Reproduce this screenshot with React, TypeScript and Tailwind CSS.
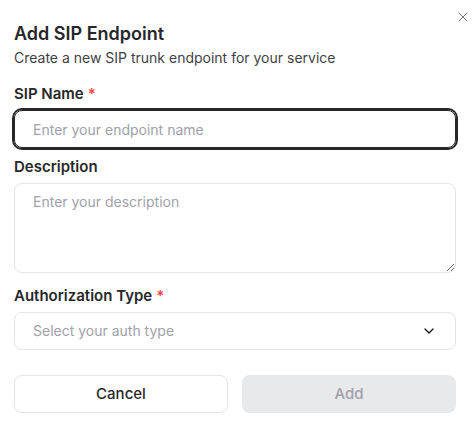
import { ChevronDown, X } from "lucide-react";

// Add SIP endpoint dialog: title, three fields and the action row.
function FieldLabel({ children, required }: { children: React.ReactNode; required?: boolean }) {
  return (
    <label className="block h-6 text-[15px] leading-6 font-semibold text-[#27272a]">
      {children}
      {required && <span className="ml-1 text-[#ef4444]">*</span>}
    </label>
  );
}

export default function App() {
  return (
    <div className="relative w-[476px] h-[424px] bg-white font-['Inter',sans-serif] pl-[14px] pr-5 pt-5">
      <button className="absolute top-[9px] right-[5px] text-[#71717a]">
        <X size={16} strokeWidth={1.5} />
      </button>

      <h2 className="text-lg leading-7 font-semibold text-[#27272a]">Add SIP Endpoint</h2>
      <p className="text-sm leading-5 text-[#3f3f46]">Create a new SIP trunk endpoint for your service</p>

      <div className="mt-[14px] flex flex-col gap-1">
        <FieldLabel required>SIP Name</FieldLabel>
        <input
          className="block h-[38px] w-full rounded-lg border border-[#27272a] ring-2 ring-[#27272a] px-[18px] text-sm outline-none placeholder:text-[#a1a1aa]"
          placeholder="Enter your endpoint name"
        />
      </div>

      <div className="mt-[7px] flex flex-col gap-1">
        <FieldLabel>Description</FieldLabel>
        <textarea
          className="block h-[90px] w-full rounded-lg border border-[#e4e4e7] px-[18px] py-2 text-sm leading-5 outline-none placeholder:text-[#a1a1aa]"
          placeholder="Enter your description"
        />
      </div>

      <div className="mt-[11px] flex flex-col gap-1">
        <FieldLabel required>Authorization Type</FieldLabel>
        <button className="flex h-[38px] w-full items-center justify-between rounded-lg border border-[#e4e4e7] px-[18px] text-sm text-[#a1a1aa]">
          <span>Select your auth type</span>
          <ChevronDown size={16} strokeWidth={2} className="text-[#18181b]" />
        </button>
      </div>

      <div className="mt-[25px] grid grid-cols-2 gap-[14px]">
        <button className="h-[38px] rounded-lg border border-[#e4e4e7] bg-white text-[15px] font-medium text-[#27272a]">
          Cancel
        </button>
        <button className="h-[38px] rounded-lg bg-[#e8e9eb] text-[15px] font-medium text-[#a1a1aa]" disabled>
          Add
        </button>
      </div>
    </div>
  );
}
